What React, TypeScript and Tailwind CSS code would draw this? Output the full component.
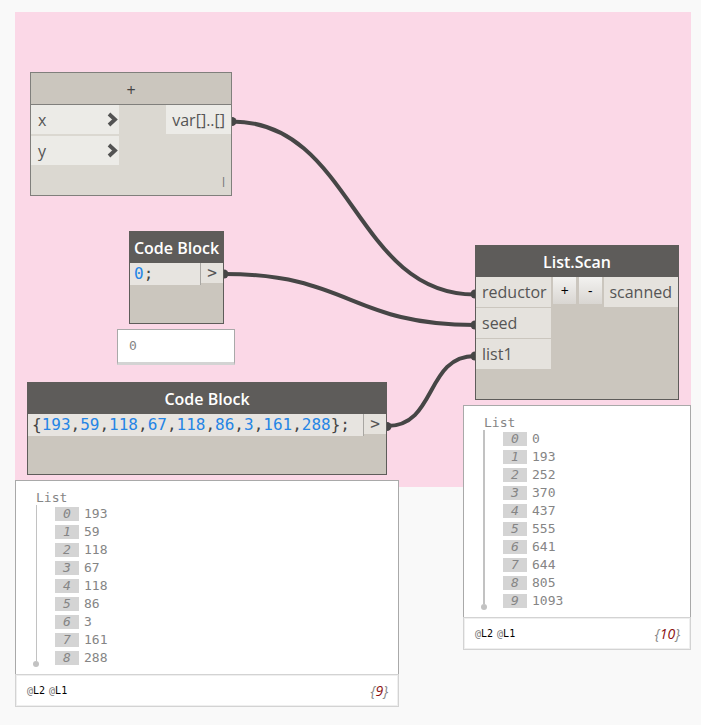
import React from "react";

const SANS = "font-['Open_Sans','Noto_Sans',sans-serif]";
const MONO = "font-['DejaVu_Sans_Mono',monospace]";

function Wires() {
  return (
    <svg
      className="pointer-events-none absolute left-0 top-0"
      width="701"
      height="725"
      viewBox="0 0 701 725"
      aria-hidden="true"
    >
      <g fill="none" stroke="#464646" strokeWidth="4">
        <path d="M232 121.5C353 121.5 354 294.500 475 294.500" />
        <path d="M224 274C350 274 350 325 475 325" />
        <path d="M387 426C437 426 425 356 475 356" />
      </g>
      <g fill="#464646">
        <circle cx="232" cy="121.500" r="4.500" />
        <circle cx="224" cy="274" r="4.500" />
        <circle cx="387" cy="426.500" r="4.500" />
        <circle cx="475" cy="294" r="4.500" />
        <circle cx="475" cy="325" r="4.500" />
        <circle cx="475" cy="356" r="4.500" />
      </g>
    </svg>
  );
}

function DarkHeader({ title }: { title: string }) {
  return (
    <h2 className="flex h-[31px] items-center justify-center bg-[#5e5c5a] text-base font-semibold text-white">
      {title}
    </h2>
  );
}

function Code({ source }: { source: string }) {
  return (
    <code className={`text-base leading-5 text-[#444] ${MONO}`}>
      {source.split(/(\d+)/).map((part, i) => (
        <span key={i} className={/\d/.test(part) ? "text-[#2585e5]" : ""}>
          {part}
        </span>
      ))}
    </code>
  );
}

function CodeBlock({ source, className }: { source: string; className: string }) {
  return (
    <section className={`absolute flex flex-col border border-[#5e5c5a] bg-[#cbc6be] ${className}`}>
      <DarkHeader title="Code Block" />
      <div className="flex items-start">
        <div className="flex h-[22px] grow items-center border-r border-[#a8a6a2] bg-[#e7e4e0] pl-1">
          <Code source={source} />
        </div>
        <button className={`h-5 w-[22px] bg-[#e5e2dd] text-base leading-5 text-[#555] ${MONO}`}>
          &gt;
        </button>
      </div>
    </section>
  );
}

function InputPort({ name }: { name: string }) {
  return (
    <button className="flex h-[29px] w-[88px] items-center justify-between bg-[#ecebe7] pl-[7px] pr-px text-base text-[#555]">
      {name}
      <svg width="11" height="16" viewBox="0 0 11 16" aria-hidden="true">
        <path d="M2 2L8 7.500L2 13" fill="none" stroke="#535353" strokeWidth="3.800" />
      </svg>
    </button>
  );
}

function ScanPort({ name }: { name: string }) {
  return (
    <button className="h-[30px] w-[75px] bg-[#e5e2dd] pl-1.5 text-left text-base text-[#555]">
      {name}
    </button>
  );
}

function StepButton({ label }: { label: string }) {
  return (
    <button className="h-[27px] w-[23px] bg-linear-to-b from-[#f3f2f0] to-[#d9d6d2] text-sm leading-[27px] text-black">
      {label}
    </button>
  );
}

function Preview({
  values,
  rail,
  className,
}: {
  values: number[];
  rail: string;
  className: string;
}) {
  return (
    <section className={`absolute flex flex-col bg-white text-[13px] text-[#858585] ${MONO} ${className}`}>
      <div className="border-x border-t border-[#a9a9a9] pb-[7px] pl-[17px] pt-[9px]">
        <div className="pl-[3px] leading-[15px]">List</div>
        <div className="flex">
          <div className="flex w-[6px] flex-col items-center">
            <div className={`grow bg-[#c2c2c2] ${rail}`} />
            <div className="size-[6px] rounded-full bg-[#c2c2c2]" />
          </div>
          <ol className="pl-4">
            {values.map((value, i) => (
              <li key={i} className="flex h-[18px] items-center">
                <span className="h-[14px] w-6 bg-[#d4d4d4] text-center italic leading-[14px]">{i}</span>
                <span className="pl-[5px] leading-4">{value}</span>
              </li>
            ))}
          </ol>
        </div>
      </div>
      <footer className="flex h-[33px] items-center justify-between border border-[#d3d3d3] pl-[11px] pr-2.5 shadow-[inset_0_0_0_1px_#efefef]">
        <span className="flex gap-1 text-[10px] text-[#777]">
          <span>@<b className="font-medium text-black">L2</b></span>
          <span>@<b className="font-medium text-black">L1</b></span>
        </span>
        <span className={`text-sm italic ${SANS}`}>
          {"{"}
          <span className="text-[#8b1010]">{values.length}</span>
          {"}"}
        </span>
      </footer>
    </section>
  );
}

export default function App() {
  return (
    <main className={`relative min-h-screen overflow-hidden bg-[#f9f9f9] ${SANS}`}>
      <div className="absolute left-[15px] top-3 h-[475px] w-[676px] bg-[#fbd8e7]" />
      <Wires />

      <section className="absolute left-[30px] top-[72px] flex h-[124px] w-[202px] flex-col border border-[#807f7c] bg-[#dbd8d1]">
        <h2 className="flex h-8 items-center justify-center border-b border-[#807f7c] bg-[#cbc6be] pt-0.5 text-base text-[#444]">
          +
        </h2>
        <div className="flex grow items-start justify-between">
          <div className="flex flex-col gap-0.5">
            <InputPort name="x" />
            <InputPort name="y" />
          </div>
          <button className="h-[29px] w-[65px] bg-[#ecebe7] pr-1.5 text-right text-base text-[#555]">
            var[]..[]
          </button>
        </div>
        <span className="self-end pb-1 pr-1.5 text-xs leading-4 text-[#777]">l</span>
      </section>

      <CodeBlock source="0;" className="left-[129px] top-[231px] h-[93px] w-[95px]" />
      <output className={`absolute left-[117px] top-[329px] flex h-9 w-[118px] items-center border border-b-[3px] border-[#a9a9a9] border-b-[#d3d3d3] bg-white pl-[11px] text-[13px] text-[#858585] ${MONO}`}>
        0
      </output>

      <CodeBlock
        source="{193,59,118,67,118,86,3,161,288};"
        className="left-[27px] top-[382px] h-[93px] w-[360px]"
      />
      <Preview
        values={[193, 59, 118, 67, 118, 86, 3, 161, 288]}
        rail="w-px"
        className="left-[15px] top-[480px] w-[384px]"
      />

      <section className="absolute left-[475px] top-[245px] flex h-[155px] w-[204px] flex-col border border-[#5e5c5a] bg-[#cbc6be]">
        <DarkHeader title="List.Scan" />
        <div className="flex items-start justify-between">
          <div className="flex flex-col gap-px">
            <ScanPort name="reductor" />
            <ScanPort name="seed" />
            <ScanPort name="list1" />
          </div>
          <StepButton label="+" />
          <StepButton label="-" />
          <button className="h-[30px] w-[74px] bg-[#e5e2dd] pr-1.5 text-right text-base text-[#555]">
            scanned
          </button>
        </div>
      </section>
      <Preview
        values={[0, 193, 252, 370, 437, 555, 641, 644, 805, 1093]}
        rail="w-0.5"
        className="left-[463px] top-[405px] w-[228px]"
      />
    </main>
  );
}
